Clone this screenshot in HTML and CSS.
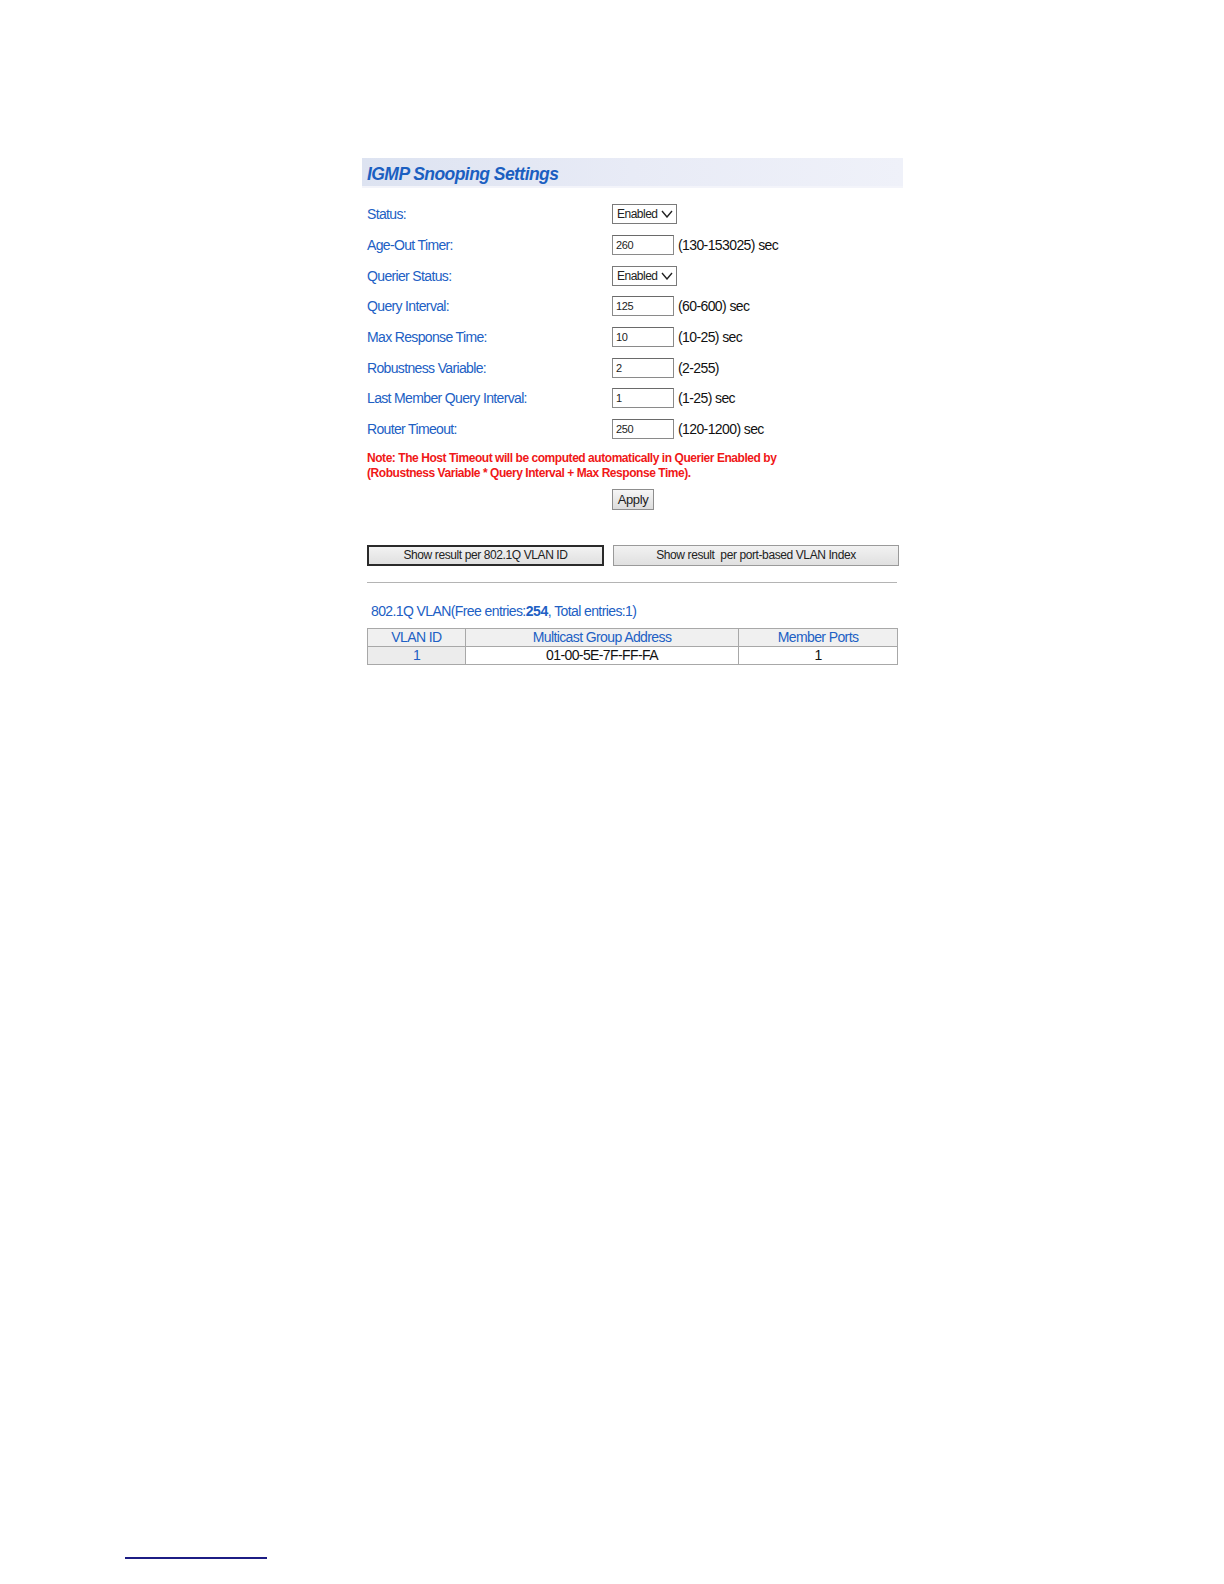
FILE: index.html
```html
<!DOCTYPE html>
<html>
<head>
<meta charset="utf-8">
<link rel="stylesheet" href="styles.css">
</head>
<body>
<div class="page">
  <div class="panel">
    <div class="title-bar"><span class="title">IGMP Snooping Settings</span></div>
    <div class="form">
      <div class="row"><span class="label">Status:</span><span class="ctrl"><span class="select">Enabled<svg class="chev" viewBox="0 0 12 8" width="12" height="8"><path d="M1 1 L6 7 L11 1" fill="none" stroke="#222" stroke-width="1.4"/></svg></span></span></div>
      <div class="row"><span class="label">Age-Out Timer:</span><span class="ctrl"><span class="input">260</span><span class="hint">(130-153025) sec</span></span></div>
      <div class="row"><span class="label">Querier Status:</span><span class="ctrl"><span class="select">Enabled<svg class="chev" viewBox="0 0 12 8" width="12" height="8"><path d="M1 1 L6 7 L11 1" fill="none" stroke="#222" stroke-width="1.4"/></svg></span></span></div>
      <div class="row"><span class="label">Query Interval:</span><span class="ctrl"><span class="input">125</span><span class="hint">(60-600) sec</span></span></div>
      <div class="row"><span class="label">Max Response Time:</span><span class="ctrl"><span class="input">10</span><span class="hint">(10-25) sec</span></span></div>
      <div class="row"><span class="label">Robustness Variable:</span><span class="ctrl"><span class="input">2</span><span class="hint">(2-255)</span></span></div>
      <div class="row"><span class="label">Last Member Query Interval:</span><span class="ctrl"><span class="input">1</span><span class="hint">(1-25) sec</span></span></div>
      <div class="row"><span class="label">Router Timeout:</span><span class="ctrl"><span class="input">250</span><span class="hint">(120-1200) sec</span></span></div>
    </div>
    <div class="note">Note: The Host Timeout will be computed automatically in Querier Enabled by<br>(Robustness Variable * Query Interval + Max Response Time).</div>
    <div class="apply-row"><span class="btn apply">Apply</span></div>
    <div class="show-row">
      <span class="btn show active">Show result per 802.1Q VLAN ID</span>
      <span class="btn show wide">Show result&nbsp; per port-based VLAN Index</span>
    </div>
    <div class="rule"></div>
    <div class="summary">802.1Q VLAN(Free entries:<b>254</b>, Total entries:1)</div>
    <table class="grid">
      <tr><th class="c1">VLAN ID</th><th class="c2">Multicast Group Address</th><th class="c3">Member Ports</th></tr>
      <tr><td class="c1 idcell">1</td><td class="c2">01-00-5E-7F-FF-FA</td><td class="c3">1</td></tr>
    </table>
  </div>
  <div class="footer-rule"></div>
</div>
</body>
</html>
```

FILE: styles.css
```css
html, body {
  margin: 0;
  padding: 0;
  background: #ffffff;
}
.page {
  position: relative;
  width: 1224px;
  height: 1584px;
  font-family: "Liberation Sans", Arial, sans-serif;
}
.panel {
  padding-top: 158px;
  margin-left: 362px;
  width: 541px;
}
.title-bar {
  height: 30px;
  background: linear-gradient(to right, #dde3f1 0%, #e8ebf6 50%, #eff1f9 100%);
  display: flex;
  align-items: center;
  padding-left: 5px;
  box-shadow: inset 0 -2px 0 #f3f4fa;
}
.title {
  font-size: 17.5px;
  font-weight: bold;
  font-style: italic;
  color: #1b5fc1;
  letter-spacing: -0.55px;
  position: relative;
  top: 1px;
}
.form {
  margin-top: 11px;
  padding-left: 5px;
}
.row {
  display: flex;
  align-items: center;
  height: 30.7px;
}
.label {
  width: 245px;
  font-size: 14px;
  color: #2160c4;
  letter-spacing: -0.65px;
}
.ctrl {
  display: flex;
  align-items: center;
}
.select {
  width: 59px;
  height: 18px;
  border: 1px solid #7a7a7a;
  display: flex;
  align-items: center;
  justify-content: space-between;
  padding-left: 4px;
  font-size: 12px;
  color: #222;
  letter-spacing: -0.5px;
  background: #fff;
}
.chev {
  margin-right: 3px;
}
.input {
  width: 57px;
  height: 18px;
  border: 1px solid #8a8a8a;
  border-top-color: #6a6a6a;
  display: flex;
  align-items: center;
  padding-left: 3px;
  font-size: 11px;
  color: #222;
  letter-spacing: -0.4px;
  background: #fff;
}
.hint {
  margin-left: 4px;
  font-size: 14px;
  color: #111;
  letter-spacing: -0.6px;
}
.note {
  margin-top: 6px;
  padding-left: 5px;
  font-size: 12px;
  line-height: 15px;
  font-weight: bold;
  color: #f01818;
  letter-spacing: -0.45px;
}
.apply-row {
  margin-top: 8px;
  padding-left: 250px;
  display: flex;
}
.btn {
  display: flex;
  align-items: center;
  justify-content: center;
  box-sizing: border-box;
  font-size: 12px;
  color: #222;
  letter-spacing: -0.4px;
  background: linear-gradient(#f6f6f6, #dcdcdc);
  border: 1px solid #8d8d8d;
}
.apply {
  width: 42px;
  height: 21px;
  font-size: 13px;
}
.show-row {
  margin-top: 35px;
  padding-left: 5px;
  display: flex;
  gap: 9px;
}
.show {
  height: 21px;
  width: 237px;
  background: linear-gradient(#f2f2f2, #e0e0e0);
}
.show.active {
  border: 2px solid #2a2a2a;
}
.show.wide {
  width: 286px;
  border-color: #9a9a9a;
}
.rule {
  margin: 16px 0 0 5px;
  width: 530px;
  height: 1px;
  background: #b4b4b4;
}
.summary {
  margin-top: 20px;
  padding-left: 9px;
  font-size: 14px;
  color: #2160c4;
  letter-spacing: -0.6px;
}
.summary b {
  font-weight: bold;
  letter-spacing: -0.4px;
}
.grid {
  margin: 9px 0 0 5px;
  border-collapse: collapse;
  width: 531px;
  font-size: 14px;
  letter-spacing: -0.6px;
}
.grid th, .grid td {
  border: 1px solid #a8a8a8;
  height: 17px;
  padding: 0;
  text-align: center;
  line-height: 16px;
}
.grid th {
  font-weight: normal;
  color: #2160c4;
  background: #f0f0f0;
}
.grid td {
  color: #111;
  background: #fff;
}
.grid td.idcell {
  background: #ececec;
  color: #2160c4;
}
.c1 { width: 97px; }
.c2 { width: 272px; }
.c3 { width: 158px; }
.footer-rule {
  position: absolute;
  left: 125px;
  top: 1557px;
  width: 142px;
  height: 2px;
  background: #1c1c84;
}
```
